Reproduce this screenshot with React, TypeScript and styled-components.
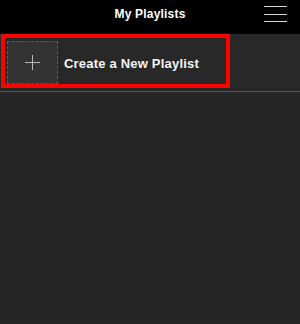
import React from 'react';
import styled, { createGlobalStyle } from 'styled-components';

const GlobalStyle = createGlobalStyle`
  html, body {
    margin: 0;
    padding: 0;
    background: #262626;
  }
  * {
    box-sizing: border-box;
  }
`;

const Page = styled.div`
  width: 300px;
  height: 324px;
  background: #262626;
  font-family: "Liberation Sans", Arial, sans-serif;
  color: #fff;
`;

const Header = styled.header`
  height: 34px;
  background: #000;
  display: flex;
  align-items: center;
  justify-content: center;
  position: relative;

  > h1 {
    margin: 0 0 6px;
    font-size: 12px;
    font-weight: bold;
    letter-spacing: 0.2px;
  }
`;

const MenuButton = styled.button`
  position: absolute;
  right: 13px;
  top: 6px;
  width: 23px;
  height: 16px;
  padding: 0;
  border: none;
  background: none;
  display: flex;
  flex-direction: column;
  justify-content: space-between;

  > span {
    display: block;
    height: 1px;
    width: 100%;
    background: #d8d8d8;
  }
`;

const Row = styled.section`
  height: 58px;
  padding: 0 0 0 1px;
  border-bottom: 1px solid #555;
  background: #282828;
`;

const Highlight = styled.div`
  width: 229px;
  height: 54px;
  border: 4px solid #f00;
  display: flex;
  align-items: flex-start;
  gap: 6px;
  padding: 3px 0 0 2px;
`;

const Thumb = styled.div`
  width: 51px;
  height: 43px;
  border: 1px dashed #5a5a5a;
  background: #333;
  display: flex;
  align-items: center;
  justify-content: center;
`;

const Label = styled.span`
  align-self: center;
  font-size: 13px;
  font-weight: bold;
  letter-spacing: 0.2px;
  color: #f4f4f4;
  margin-top: 1px;
`;

export default function App() {
  return (
    <Page>
      <GlobalStyle />
      <Header>
        <h1>My Playlists</h1>
        <MenuButton>
          <span />
          <span />
          <span />
        </MenuButton>
      </Header>
      <Row>
        <Highlight>
          <Thumb>
            <svg width="15" height="15" viewBox="0 0 15 15">
              <path d="M7.5 0V15M0 7.5H15" stroke="#bbb" strokeWidth="1" />
            </svg>
          </Thumb>
          <Label>Create a New Playlist</Label>
        </Highlight>
      </Row>
    </Page>
  );
}
